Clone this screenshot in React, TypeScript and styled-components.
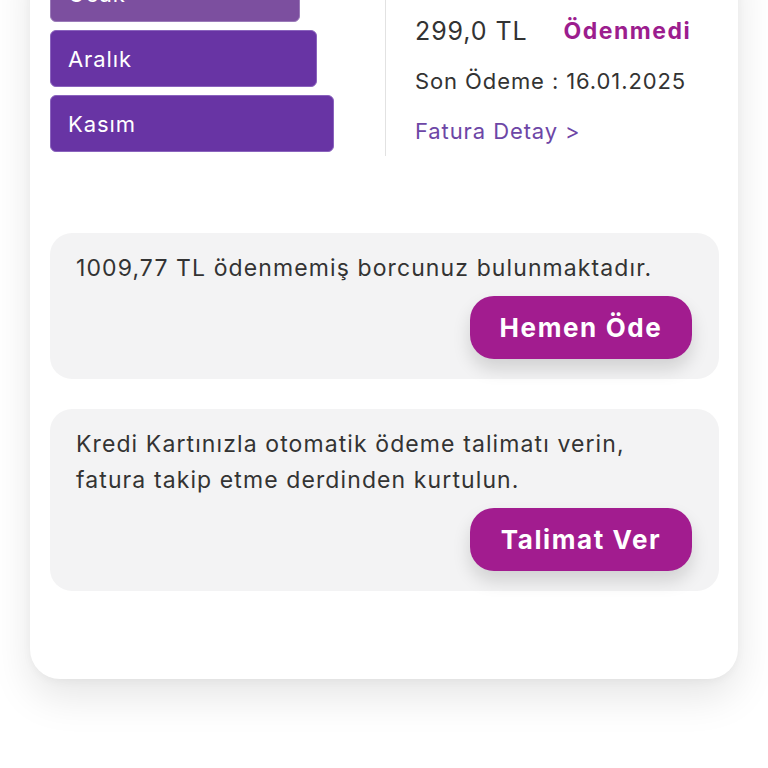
import React from "react";
import styled, { createGlobalStyle } from "styled-components";

const Global = createGlobalStyle`
  html, body { margin: 0; padding: 0; background: #ffffff; }
  body { font-family: Inter, "Open Sans", "Noto Sans", sans-serif; color: #333333; overflow: hidden; }
  * { box-sizing: border-box; }
`;

const Page = styled.div`
  width: 768px;
  height: 768px;
  overflow: hidden;
  padding: 0 30px;
`;

const Card = styled.div`
  margin-top: -60px;
  background: #ffffff;
  border-radius: 30px;
  box-shadow: 0 18px 40px rgba(0, 0, 0, 0.1), 0 2px 10px rgba(0, 0, 0, 0.04);
  padding: 25px 19px 88px 20px;
`;

const Top = styled.div`
  display: flex;
  align-items: stretch;
`;

const Months = styled.div`
  width: 335px;
  display: flex;
  flex-direction: column;
  gap: 8px;
  padding-bottom: 4px;
`;

const MonthBar = styled.div<{ $faded?: boolean }>`
  height: 57px;
  border-radius: 6px;
  background: ${(p) => (p.$faded ? "#7c4f9f" : "#6834a4")};
  border: 1px solid ${(p) => (p.$faded ? "#9a7ab8" : "#8a63bd")};
  color: #ffffff;
  font-size: 22px;
  letter-spacing: 0.9px;
  display: flex;
  align-items: center;
  padding-left: 17px;
`;

const Detail = styled.div`
  flex: 1;
  border-left: 1px solid #e2e2e2;
  padding-left: 29px;
  display: flex;
  flex-direction: column;
  justify-content: flex-end;
`;

const AmountRow = styled.div`
  display: flex;
  align-items: center;
  gap: 36px;
  height: 50px;
`;

const Amount = styled.span`
  font-size: 25px;
  letter-spacing: 0.9px;
  color: #333333;
`;

const Status = styled.span`
  font-size: 23px;
  font-weight: 700;
  letter-spacing: 1.5px;
  color: #9c1d8e;
`;

const InfoLine = styled.div<{ $link?: boolean }>`
  height: 50px;
  display: flex;
  align-items: center;
  font-size: 22px;
  letter-spacing: 0.9px;
  color: ${(p) => (p.$link ? "#6d46a6" : "#333333")};
`;

const Notice = styled.div<{ $top: number }>`
  margin-top: ${(p) => p.$top}px;
  background: #f3f3f4;
  border-radius: 22px;
  padding: 17px 27px 20px 26px;
  display: flex;
  flex-direction: column;
`;

const NoticeText = styled.p`
  margin: 0;
  font-size: 23px;
  line-height: 36px;
  letter-spacing: 1.1px;
  color: #333333;
`;

const Action = styled.button`
  align-self: flex-end;
  margin-top: 10px;
  width: 222px;
  height: 63px;
  border: none;
  border-radius: 24px;
  background: #a21c8f;
  color: #ffffff;
  font-family: inherit;
  font-size: 26px;
  font-weight: 700;
  letter-spacing: 1.6px;
  box-shadow: 0 10px 18px rgba(0, 0, 0, 0.14);
  cursor: pointer;
`;

const months = [
  { name: "Ocak", width: 250, faded: true },
  { name: "Aralık", width: 267 },
  { name: "Kasım", width: 284 },
];

export default function App() {
  return (
    <>
      <Global />
      <Page>
        <Card>
          <Top>
            <Months>
              {months.map((m) => (
                <MonthBar key={m.name} $faded={m.faded} style={{ width: m.width }}>
                  {m.name}
                </MonthBar>
              ))}
            </Months>
            <Detail>
              <AmountRow>
                <Amount>299,0 TL</Amount>
                <Status>Ödenmedi</Status>
              </AmountRow>
              <InfoLine>Son Ödeme : 16.01.2025</InfoLine>
              <InfoLine $link>Fatura Detay &gt;</InfoLine>
            </Detail>
          </Top>
          <Notice $top={77}>
            <NoticeText>1009,77 TL ödenmemiş borcunuz bulunmaktadır.</NoticeText>
            <Action>Hemen Öde</Action>
          </Notice>
          <Notice $top={30}>
            <NoticeText>
              Kredi Kartınızla otomatik ödeme talimatı verin,
              <br />
              fatura takip etme derdinden kurtulun.
            </NoticeText>
            <Action>Talimat Ver</Action>
          </Notice>
        </Card>
      </Page>
    </>
  );
}
